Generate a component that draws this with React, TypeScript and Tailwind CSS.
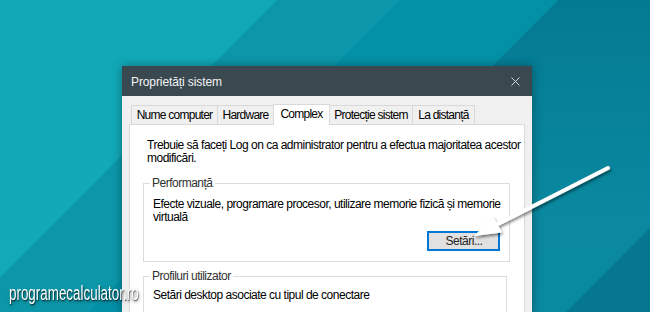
import React from "react";

const tabs = [
  { label: "Nume computer", w: "w-[87px]" },
  { label: "Hardware", w: "w-[57px]" },
  { label: "Complex", w: "w-[57px]", active: true },
  { label: "Protecție sistem", w: "w-[84px]" },
  { label: "La distanță", w: "w-[63px]" },
];

function Wallpaper() {
  return (
    <svg className="absolute inset-0" width="650" height="312" viewBox="0 0 650 312">
      <defs>
        <linearGradient id="rg" x1="0" y1="0" x2="0" y2="1">
          <stop offset="0" stopColor="#037a92" />
          <stop offset="0.7" stopColor="#0a89a0" />
          <stop offset="1" stopColor="#0a8aa1" />
        </linearGradient>
        <linearGradient id="lg" x1="0" y1="0" x2="0" y2="1">
          <stop offset="0" stopColor="#11a9b7" />
          <stop offset="1" stopColor="#13a9b8" />
        </linearGradient>
      </defs>
      <rect width="650" height="312" fill="#11a8b6" />
      <polygon points="0,0 277,0 -35,312 0,312" fill="url(#lg)" />
      <polygon points="277,0 400,0 88,312 -35,312" fill="#0b97a9" />
      <polygon points="400,0 558,0 246,312 88,312" fill="#0391a8" />
      <polygon points="558,0 650,0 650,312 246,312" fill="url(#rg)" />
      <polygon points="650,228 566,312 650,312" fill="#05778f" />
    </svg>
  );
}

function Arrow() {
  return (
    <svg className="absolute inset-0 pointer-events-none" width="650" height="312" viewBox="0 0 650 312">
      <defs>
        <filter id="ds" x="-20%" y="-20%" width="140%" height="140%">
          <feDropShadow dx="1" dy="2" stdDeviation="1.5" floodColor="#000" floodOpacity="0.5" />
        </filter>
      </defs>
      <g filter="url(#ds)">
        <line x1="608" y1="168" x2="496" y2="225" stroke="#ffffff" strokeWidth="4" strokeLinecap="round" />
        <polygon points="474,236 493,216.5 502,232.5" fill="#ffffff" />
      </g>
    </svg>
  );
}

export default function App() {
  return (
    <div className="relative w-[650px] h-[312px] overflow-hidden font-['Liberation_Sans',Arial,sans-serif]">
      <Wallpaper />

      {/* Window */}
      <div className="absolute left-[122px] top-[66px] w-[410px] h-[250px] overflow-hidden bg-[#f0f0f0] shadow-[0_0_10px_rgba(0,0,0,0.35)] flex flex-col">
        <div className="shrink-0 h-[30px] bg-[#3a4850] flex items-center justify-between pl-[9px] pr-[12px]">
          <span className="text-[12px] text-[#f4f4f4] leading-[14px] pt-[1px] tracking-[-0.1px]">Proprietăți sistem</span>
          <svg width="9" height="9" viewBox="0 0 9 9">
            <path d="M0.5 0.5 L8.5 8.5 M8.5 0.5 L0.5 8.5" stroke="#cfd4d6" strokeWidth="1" />
          </svg>
        </div>

        <div className="flex flex-col flex-1 min-h-0 px-[7px] pt-[8px] text-[12px] tracking-[-0.5px] text-black">
          {/* Tabs */}
          <div className="shrink-0 flex items-end h-[20px] pl-[2px] tracking-[-0.75px]">
            {tabs.map((t, i) =>
              t.active ? (
                <div
                  key={t.label}
                  className={`${t.w} h-[21px] -mb-px -ml-px relative z-10 bg-white border-t border-l border-r border-[#d9d9d9] flex items-center justify-center pb-[2px] leading-[13px]`}
                >
                  {t.label}
                </div>
              ) : (
                <div
                  key={t.label}
                  className={`${t.w} h-[19px] ${i === 0 ? "" : "-ml-px"} bg-[#f0f0f0] border-t border-l border-r border-[#d9d9d9] flex items-center justify-center leading-[13px]`}
                >
                  {t.label}
                </div>
              )
            )}
          </div>

          {/* Panel */}
          <div className="flex-1 shrink-0 bg-white border border-[#d9d9d9] pl-[13px] pr-[17px] pt-[14px] leading-[13px]">
            <div className="pl-[4px] whitespace-nowrap">
              <div>Trebuie să faceți Log on ca administrator pentru a efectua majoritatea acestor</div>
              <div>modificări.</div>
            </div>

            <fieldset className="mt-[12px] border border-[#dcdcdc]">
              <legend className="ml-[6px] px-[2px] leading-[13px] text-[#303030]">Performanță</legend>
              <div className="pl-[9px] pr-[9px] pt-[8px] pb-[10px] whitespace-nowrap">
                <div>Efecte vizuale, programare procesor, utilizare memorie fizică și memorie</div>
                <div>virtuală</div>
                <div className="flex justify-end mt-[7px]">
                  <div className="w-[73px] h-[20px] border-2 border-[#0078d7] bg-[#e1e1e1] flex items-center justify-center text-[#222]">
                    Setări...
                  </div>
                </div>
              </div>
            </fieldset>

            <fieldset className="mt-[8px] border border-[#dcdcdc] h-[60px]">
              <legend className="ml-[6px] px-[2px] leading-[13px] text-[#303030]">Profiluri utilizator</legend>
              <div className="pl-[9px] pt-[6px] whitespace-nowrap">
                <div>Setări desktop asociate cu tipul de conectare</div>
              </div>
            </fieldset>
          </div>
        </div>
      </div>

      {/* Watermark */}
      <div className="absolute left-[9px] top-[283px] origin-left scale-x-[0.67] text-[20px] leading-[20px] text-white whitespace-nowrap [text-shadow:1px_1px_1px_rgba(0,0,0,0.6),1px_2px_4px_rgba(0,0,0,0.5)]">
        programecalculator.ro
      </div>

      <Arrow />
    </div>
  );
}
